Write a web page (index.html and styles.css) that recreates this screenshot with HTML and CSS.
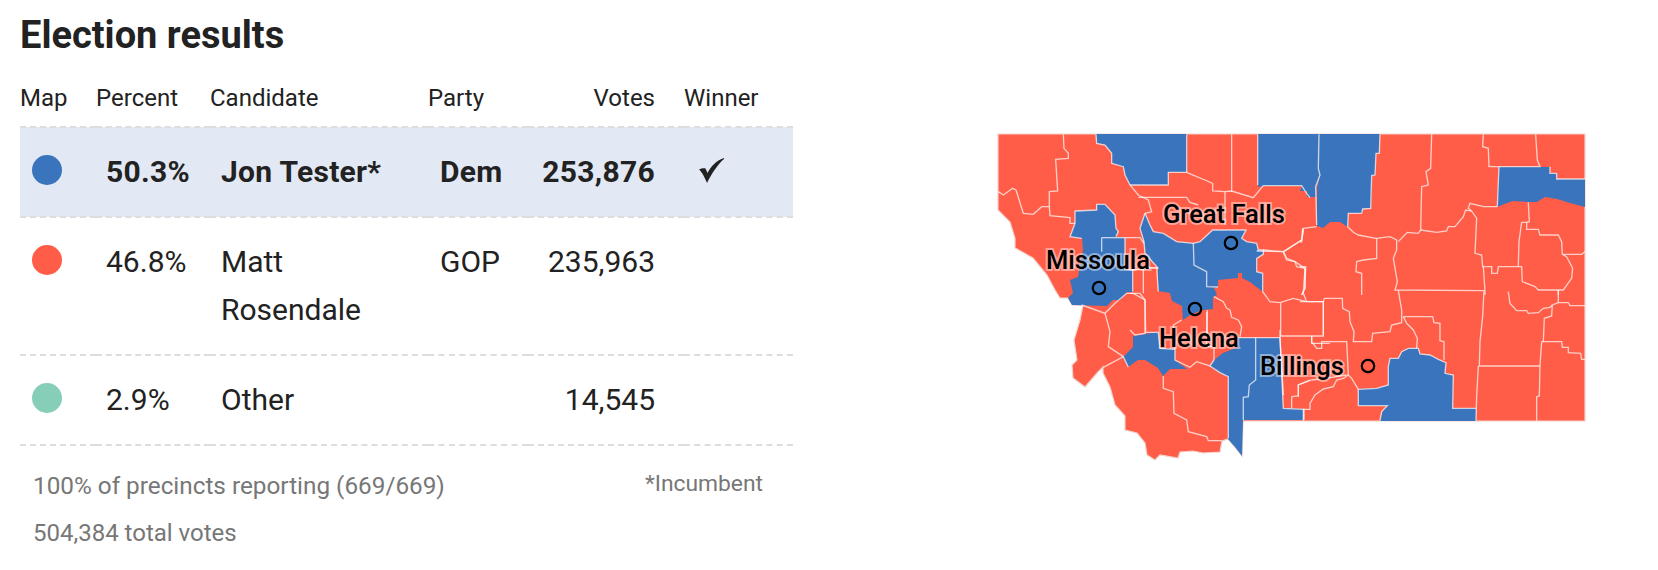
FILE: index.html
```html
<!DOCTYPE html>
<html lang="en">
<head>
  <meta charset="UTF-8">
  <title>Election results</title>
  <link rel="stylesheet" href="styles.css">
</head>
<body>
  <div class="page">
    <div class="results">
      <h2 class="title">Election results</h2>
      <table class="race">
        <thead>
          <tr>
            <th class="col-map">Map</th>
            <th class="col-pct">Percent</th>
            <th class="col-name">Candidate</th>
            <th class="col-party">Party</th>
            <th class="col-votes">Votes</th>
            <th class="col-win">Winner</th>
          </tr>
        </thead>
        <tbody>
          <tr class="winner">
            <td><span class="dot dem"></span></td>
            <td class="pct">50.3%</td>
            <td class="name">Jon Tester*</td>
            <td class="party">Dem</td>
            <td class="votes">253,876</td>
            <td class="check">
              <svg class="check-icon" viewBox="0 0 25 25" width="25" height="25">
                <path d="M0 11.5C2 10.5 5 10 6.5 10.5L8.5 15C12 8 18 2 25 0L25 1C19 6 13 15 8 25C6 20 3 14 0 11.5Z"/>
              </svg>
            </td>
          </tr>
          <tr>
            <td><span class="dot gop"></span></td>
            <td class="pct">46.8%</td>
            <td class="name">Matt Rosendale</td>
            <td class="party">GOP</td>
            <td class="votes">235,963</td>
            <td></td>
          </tr>
          <tr>
            <td><span class="dot other"></span></td>
            <td class="pct">2.9%</td>
            <td class="name">Other</td>
            <td class="party"></td>
            <td class="votes">14,545</td>
            <td></td>
          </tr>
        </tbody>
      </table>
      <div class="foot">
        <div class="foot-row">
          <span>100% of precincts reporting (669/669)</span>
          <span class="incumbent">*Incumbent</span>
        </div>
        <div class="foot-total">504,384 total votes</div>
      </div>
    </div>

    <svg class="map" viewBox="0 0 600 340" width="600" height="340">
      <!-- state outline -->
      <path class="red" d="M8 9H595V296H253L252 331L245 322L238 314L232 316L230 327L213 328L203 326L190 327L188 333L170 330L165 335L157 330L155 318L147 308L135 305L135 291L125 280L120 262L113 248L113 242L108 247L95 262L83 253L82 240L87 235L84 215L90 195L93 180L82 180L78 173L70 173L65 165L57 150L43 133L25 123L25 113L20 97L8 85Z"/>

      <!-- counties that went blue -->
      <path class="blue" d="M106 9H197V47H178V60H140L135 50L133 42L122 38L122 28L115 20L107 18Z"/>
      <path class="blue" d="M268 9H329L328 43L330 50L326 62L326 72L317 72L317 66L310 66L312 61H273L268 62Z"/>
      <path class="blue" d="M329 9H390L389 28L386 28L385 50L382 51L381 83L373 84L372 88L358 88L358 102L350 97L340 97L333 103L327 101L327 63L330 50L328 43Z"/>
      <path class="blue" d="M509 42H560V48H567V54H595V82L580 78L567 74L555 72L547 77L538 77L523 76L517 78L507 82Z"/>
      <path class="blue" d="M85 86L107 85L107 79L115 79L125 90L126 103L128 107L126 112H135V144L143 145V167L137 167L130 175L123 175L117 181L82 180L78 173L83 168L80 155L88 152L93 125L92 113L80 112L85 98Z"/>
      <path class="blue" d="M155 88L160 100L163 107L173 108L187 117L204 118L204 140L217 147L217 160L228 162L224 163L227 170L223 172L223 184L212 185L200 190L193 195L192 181L182 176L180 168L168 166L168 143L155 128L154 117L150 103Z"/>
      <path class="blue" d="M204 118L210 117L223 105H256L252 113L257 117L267 118L268 125H273V129L267 133V147L273 148V167L260 157L252 153V148H248V153L228 155V162L217 160L217 147L204 140Z"/>
      <path class="blue" d="M143 211L168 207L170 223L185 224L185 235L197 244L180 244L173 251L168 243L155 235L148 235L138 242L133 232L143 222Z"/>
      <path class="blue" d="M248 213H290L293 283L314 284V295H253L252 331L245 322L238 314V252L230 248L220 241L224 235L233 228L248 222Z"/>
      <path class="blue" d="M368 264L387 263L398 260V242L400 233H408L412 227L418 223H428L430 229L440 230L448 234L456 238L455 248L463 250V283H486V296H390L392 287L397 281H368Z"/>

      <!-- county lines, traced from the top left quarter -->
      <g class="lines" transform="scale(.3333)">
        <polyline points="220,28 222,70 235,85 235,100 197,103 203,198 178,200 178,245 155,245 130,268 100,265 78,195 68,190 40,210 25,200"/>
        <polyline points="178,245 180,272 240,278 240,295 255,295"/>
        <polyline points="318,28 320,55 345,60 365,85 365,115 400,125 405,150 420,180 445,210 475,225 485,260 465,265"/>
        <polyline points="420,180 535,180 535,142 590,142 620,155 645,165 668,175 668,198 705,200 705,300"/>
        <polyline points="590,28 590,142"/>
        <polyline points="725,28 725,200"/>
        <polyline points="705,200 725,198 790,218 820,182 935,182 950,205 960,218"/>
        <polyline points="803,28 803,180"/>
        <polyline points="445,217 590,217 600,232 625,240"/>
        <polyline points="938,310 935,345 890,375 880,380 800,378"/>
        <polyline points="880,380 890,405 915,410 920,425 945,430 945,490 935,510"/>
        <polyline points="405,338 450,338 462,355"/>
        <polyline points="335,338 405,338"/>
        <polyline points="335,338 335,380"/>
        <polyline points="275,340 240,335 255,295 255,258 320,255 320,238 345,238 375,270 378,310 385,320 378,335"/>
        <polyline points="405,338 405,432 428,435 500,428 505,500"/>
        <polyline points="428,430 428,500"/>
        <polyline points="465,265 480,300 490,320 520,325 560,350 610,355 612,420 650,440 650,485 684,486"/>
        <polyline points="465,265 450,310 462,350 465,385 505,430"/>
        <polyline points="610,355 630,350 668,315 768,315 755,340 770,350 800,355 805,375 820,375 820,388 800,400 800,440 818,445 818,500"/>
      </g>

      <!-- top right quarter -->
      <g class="lines" transform="translate(310 0) scale(.3333)">
        <polyline points="57,28 55,130 60,150 47,185 50,300"/>
        <polyline points="240,28 238,85 228,85 225,150 215,152 212,250 188,252 185,265 145,265 143,305 160,322 175,330 228,340 270,335 290,345 290,375 280,400 292,470 285,495 550,497"/>
        <polyline points="395,28 392,130 378,140 385,180 365,185 362,315 355,325 322,322 295,350"/>
        <polyline points="362,315 410,322 440,318 445,305 465,305 490,275 497,255 515,258 530,280 525,385 545,390 548,425 575,425 575,445 592,445 595,425 665,425 667,470 705,485 715,495 790,495 815,460 818,430 800,395 787,388 785,350 775,330 720,330 715,313 680,313 680,292 665,292 657,350 655,425"/>
        <polyline points="515,258 505,250 510,235 550,245 592,245"/>
        <polyline points="685,232 688,290 680,292"/>
        <polyline points="550,28 548,65 565,70 567,125 720,125 712,105 707,28"/>
        <polyline points="597,125 592,245"/>
        <polyline points="750,125 750,145 770,145 770,162 855,162"/>
        <polyline points="790,388 845,388 855,380"/>
        <polyline points="230,340 230,400 190,405 170,410 168,440 185,445 185,510"/>
        <polyline points="550,425 555,497 555,510"/>
        <polyline points="50,305 10,310 5,350 0,352"/>
        <polyline points="0,425 17,425 15,490 5,510"/>
        <polyline points="775,495 775,510"/>
      </g>

      <!-- center, around Helena -->
      <g class="lines" transform="translate(140 105) scale(.3333)">
        <polyline points="0,190 30,190 45,210 45,310 15,315 0,300"/>
        <polyline points="40,110 85,115"/>
        <polyline points="40,110 40,190"/>
        <polyline points="252,200 280,215 290,235 300,240 305,262 325,270 335,290 330,320"/>
        <polyline points="232,240 232,320"/>
        <polyline points="398,185 420,215 450,218 490,205 530,215 580,215 580,318 452,318 452,218"/>
        <polyline points="530,215 520,190 525,115 495,95 470,85 460,65 400,60"/>
        <polyline points="460,65 515,30 520,0"/>
        <polyline points="545,318 545,340 600,340"/>
      </g>

      <!-- bottom left quarter -->
      <g class="lines" transform="translate(0 165) scale(.3333)">
        <polyline points="275,45 345,70 360,125 355,170 400,200"/>
        <polyline points="345,70 375,40 410,10 430,10 465,30 467,127 505,127"/>
        <polyline points="505,127 510,175 555,178 555,210 600,232 620,215 660,228 672,210 672,170 650,170 650,65"/>
        <polyline points="575,90 550,105 555,178"/>
        <polyline points="660,228 690,248 715,260 715,445"/>
        <polyline points="520,258 520,295 550,305 552,370 590,390 595,425 650,440 655,452 695,452"/>
        <polyline points="340,232 400,200 415,232"/>
        <polyline points="797,143 797,270 778,285 775,320 760,322 760,390"/>
        <polyline points="745,143 870,143 880,355 942,358 942,390"/>
        <polyline points="905,320 905,355"/>
        <polyline points="905,320 925,318 925,285 960,270"/>
      </g>

      <!-- around Billings -->
      <g class="lines" transform="translate(250 205) scale(.3333)">
        <polyline points="215,150 255,145 320,135"/>
        <polyline points="120,0 120,25 130,195"/>
        <polyline points="175,200 175,165 215,150"/>
      </g>

      <!-- bottom right quarter -->
      <g class="lines" transform="translate(310 165) scale(.3333)">
        <polyline points="0,35 70,35 73,25 127,25 128,55 148,65 150,95 162,125 160,155 215,155 218,130 270,125 275,105 305,98 305,60 298,20 295,0"/>
        <polyline points="70,35 70,135"/>
        <polyline points="35,138 35,155 50,175 65,175 65,155 140,155 145,255"/>
        <polyline points="310,80 398,80 402,98 420,100 420,152 432,155 432,210"/>
        <polyline points="310,80 320,100 340,120 352,145 350,175"/>
        <polyline points="552,0 548,80 540,155 538,228 720,228"/>
        <polyline points="535,228 530,320 528,392"/>
        <polyline points="725,155 785,155 787,172 805,172 805,188 842,190 845,208 855,208"/>
        <polyline points="725,155 720,228 718,318 710,320 710,392"/>
        <polyline points="730,155 733,85 755,78 757,45 775,38 805,38 810,47 855,47"/>
        <polyline points="625,5 630,40 650,62 680,62 685,70 715,68 730,55 750,52 757,45"/>
        <polyline points="775,38 775,0"/>
        <polyline points="175,298 155,265 145,255 130,265 110,270 100,290 70,297 45,315 30,340 30,358 10,358 10,392"/>
        <polyline points="175,298 175,347 262,347 245,365 240,392"/>
        <polyline points="175,298 230,295 265,285 265,230 270,205 295,205 305,185 325,175 355,175 360,192 390,195 415,208 438,218 435,250 460,255 458,355 528,355"/>
      </g>

      <!-- cities -->
      <circle class="city" cx="241" cy="118" r="6.2"/>
      <circle class="city" cx="109" cy="163" r="6.2"/>
      <circle class="city" cx="205" cy="184" r="6.2"/>
      <circle class="city" cx="378" cy="241" r="6.2"/>
      <text class="city-label" x="173" y="98">Great Falls</text>
      <text class="city-label" x="56" y="144">Missoula</text>
      <text class="city-label" x="169" y="222">Helena</text>
      <text class="city-label" x="270" y="250">Billings</text>
    </svg>
  </div>
</body>
</html>
```

FILE: styles.css
```css
body {
  margin: 0;
  background-color: #fff;
  color: #222;
  font-family: Roboto, sans-serif;
}
.page {
  display: flex;
  height: 570px;
  overflow: hidden;
}
.results {
  flex: none;
  width: 773px;
  margin-left: 20px;
}
.title {
  margin: 0;
  padding-top: 12px;
  font-size: 38px;
  line-height: 46px;
  font-weight: 700;
}
.race {
  width: 773px;
  margin-top: 17px;
  border-collapse: collapse;
  table-layout: fixed;
}
.race th {
  height: 45px;
  padding: 0 0 6px;
  font-size: 24px;
  font-weight: 400;
  text-align: left;
  vertical-align: middle;
  border-bottom: 2px dashed #ddd;
}
.race td {
  padding: 20px 0;
  font-size: 30px;
  line-height: 48px;
  vertical-align: top;
  border-bottom: 2px dashed #ddd;
}
.col-map { width: 76px; }
.col-pct { width: 114px; }
.col-name { width: 218px; }
.col-party { width: 100px; }
.col-votes { width: 127px; }
.race .col-votes { padding-right: 29px; text-align: right; }
.winner td {
  background-color: #e2e9f4;
  font-weight: 700;
  letter-spacing: 0.3px;
}
.dot {
  display: block;
  width: 30px;
  height: 30px;
  margin: 7px 0 0 12px;
  border-radius: 50%;
}
.dem { background-color: #3a74bd; }
.gop { background-color: #ff5d47; }
.other { background-color: #87ceb9; }
.race .pct { padding-left: 10px; }
.race .name { padding-left: 11px; padding-right: 20px; }
.race .party { padding-left: 12px; }
.race .votes { padding-right: 29px; text-align: right; }
.race .check { padding-left: 15px; }
.check-icon {
  display: block;
  margin-top: 10px;
  fill: #222;
}
.foot {
  padding: 25px 30px 0 13px;
  color: #777;
  font-size: 24.3px;
  line-height: 30px;
}
.foot-row {
  display: flex;
  justify-content: space-between;
}
.incumbent {
  font-size: 22.8px;
  line-height: 26px;
}
.foot-total {
  margin-top: 17px;
  font-size: 24px;
}
.map {
  flex: none;
  margin: 125px 0 0 197px;
}
.red { fill: #ff5d47; stroke: #f3d2cc; stroke-width: 1.2; }
.blue { fill: #3a74bd; }
.lines polyline {
  fill: none;
  stroke: rgba(255, 255, 255, 0.7);
  stroke-width: 4;
}
.city {
  fill: none;
  stroke: #000;
  stroke-width: 2.2;
}
.city-label {
  font-size: 25.5px;
  font-weight: 500;
  fill: #000;
  stroke: rgba(255, 255, 255, 0.45);
  stroke-width: 4px;
  paint-order: stroke;
}
```
